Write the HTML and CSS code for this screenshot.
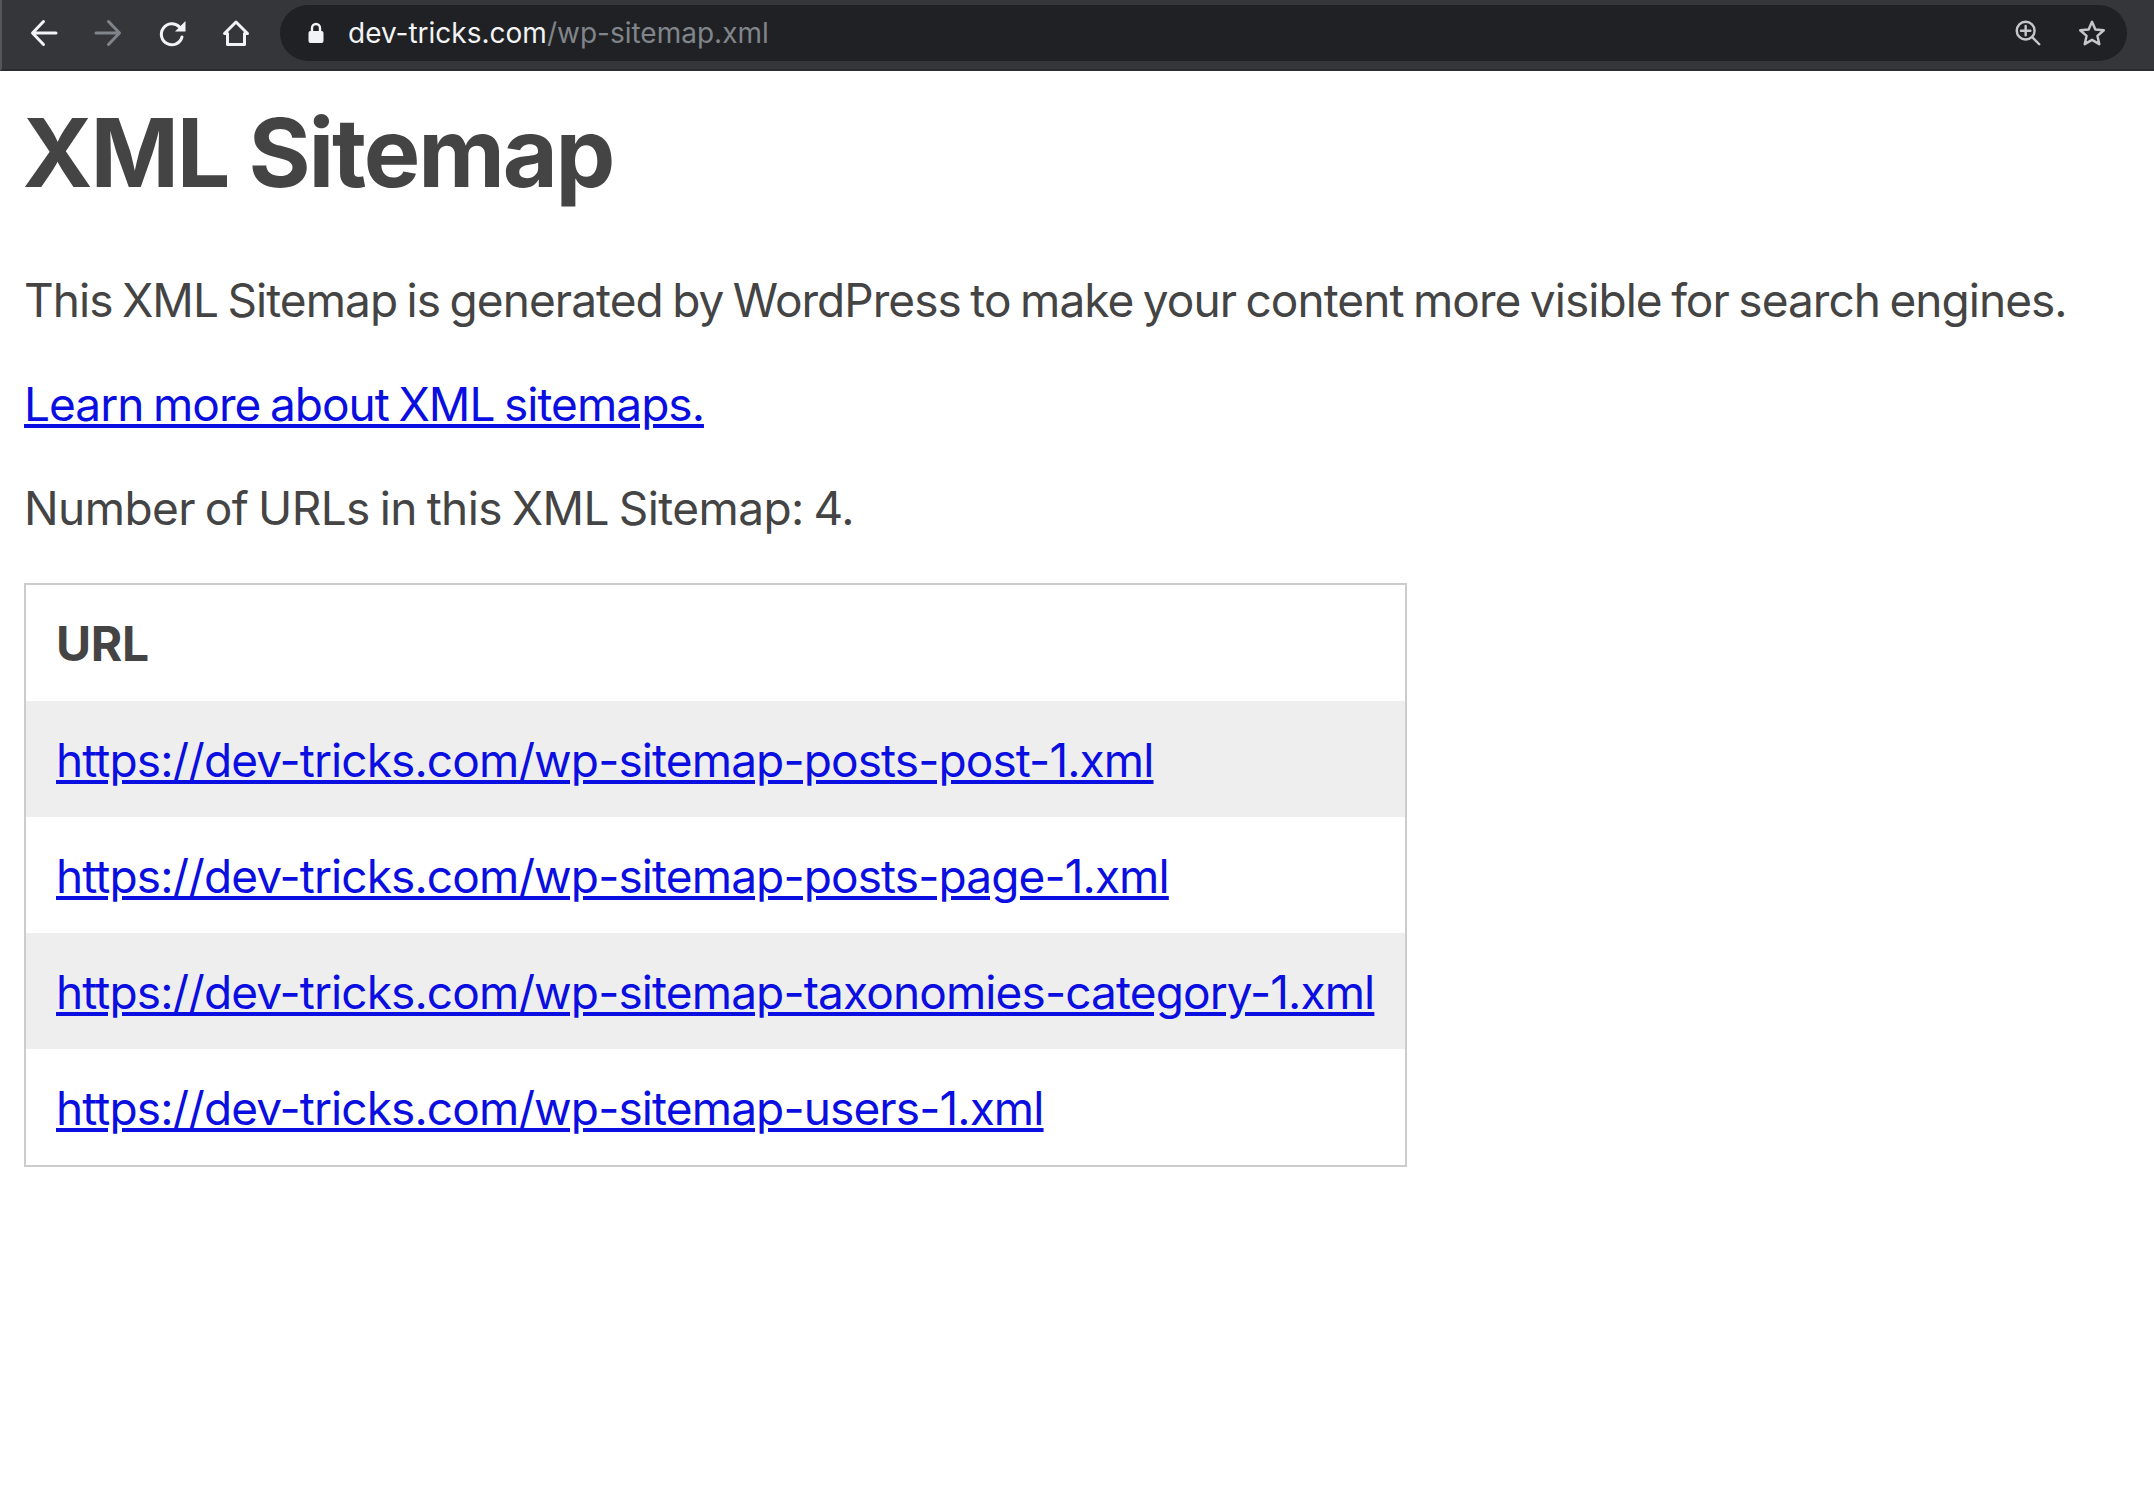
FILE: index.html
```html
<!DOCTYPE html>
<html lang="en">
  <head>
    <meta charset="UTF-8" />
    <title>XML Sitemap</title>
    <link rel="stylesheet" href="styles.css">
  </head>
  <body>
    <!-- browser toolbar -->
    <div class="toolbar">
      <div class="nav">
        <svg class="icon" viewBox="0 0 32 32"><path d="M28 16H5M15.500 4.500 4.500 16l11 11.500" /></svg>
        <svg class="icon dim" viewBox="0 0 32 32"><path d="M4 16h23M16.500 4.500l11 11.500-11 11.500" /></svg>
        <svg class="icon" viewBox="0 0 32 32"><path d="M23.500 10a10.500 10.500 0 1 0 2.500 10" /><path class="solid" d="M29.500 4v10.500H19z" /></svg>
        <svg class="icon" viewBox="0 0 32 32"><path d="M16 5 4.500 16.500h3v11h17v-11h3z" /></svg>
      </div>
      <div class="address">
        <svg class="lock" viewBox="0 0 18 22"><path class="shackle" d="M5 10V6a4 4 0 0 1 8 0v4" /><rect x="1.500" y="9" width="15" height="12" rx="2" /></svg>
        <span class="host">dev-tricks.com</span><span class="path">/wp-sitemap.xml</span>
        <div class="address-actions">
          <svg class="icon small" viewBox="0 0 32 32"><circle cx="13.500" cy="13.500" r="9.500" /><path d="M13.500 8.500v10M8.500 13.500h10M20.500 20.500 28 28" /></svg>
          <svg class="icon small" viewBox="0 0 32 32"><path d="M16 4l3.600 8.300 9 .8-6.800 6 2 8.800L16 23.300 8.200 27.900l2-8.800-6.800-6 9-.8z" /></svg>
        </div>
      </div>
    </div>

    <!-- sitemap content -->
    <div class="content">
      <h1>XML Sitemap</h1>
      <p>This XML Sitemap is generated by WordPress to make your content more visible for search engines.</p>
      <p><a href="#">Learn more about XML sitemaps.</a></p>
      <p class="count">Number of URLs in this XML Sitemap: 4.</p>
      <table class="sitemap">
        <thead>
          <tr><th>URL</th></tr>
        </thead>
        <tbody>
          <tr><td><a href="#">https://dev-tricks.com/wp-sitemap-posts-post-1.xml</a></td></tr>
          <tr><td><a href="#">https://dev-tricks.com/wp-sitemap-posts-page-1.xml</a></td></tr>
          <tr><td><a href="#">https://dev-tricks.com/wp-sitemap-taxonomies-category-1.xml</a></td></tr>
          <tr><td><a href="#">https://dev-tricks.com/wp-sitemap-users-1.xml</a></td></tr>
        </tbody>
      </table>
    </div>
  </body>
</html>
```

FILE: styles.css
```css
body {
  margin: 0;
  background-color: #fff;
  color: #444;
  font-family: Inter, "Liberation Sans", sans-serif;
}

/* toolbar */
.toolbar {
  display: flex;
  align-items: center;
  height: 71px;
  box-sizing: border-box;
  padding: 5px 27px 8px 26px;
  background-color: #35363a;
  border-left: 2px solid #55565a;
  border-bottom: 2px solid #2b2c30;
}

.nav {
  display: flex;
  gap: 32px;
  width: 252px;
}

.icon {
  width: 32px;
  height: 32px;
  fill: none;
  stroke: #f1f3f4;
  stroke-width: 3;
  stroke-linecap: round;
  stroke-linejoin: round;
}

.icon.dim {
  stroke: #80858b;
}

.icon .solid {
  fill: #f1f3f4;
  stroke: none;
}

.icon.small {
  width: 30px;
  height: 30px;
  stroke: #c4c7c9;
  stroke-width: 2.6;
}

.address {
  display: flex;
  flex: 1;
  align-items: center;
  height: 56px;
  padding: 0 20px 0 27px;
  background-color: #202124;
  border-radius: 28px;
  font-size: 28px;
}

.lock {
  width: 18px;
  height: 22px;
  margin-right: 23px;
  fill: #f1f3f4;
}

.lock .shackle {
  fill: none;
  stroke: #f1f3f4;
  stroke-width: 2.4;
}

.host {
  color: #f1f3f4;
}

.path {
  color: #80858b;
}

.address-actions {
  display: flex;
  gap: 34px;
  margin-left: auto;
}

/* content */
.content {
  padding: 0 24px;
}

h1 {
  margin: 0 0 0 -1.5px;
  padding-top: 37px;
  font-size: 95px;
  line-height: 90px;
  letter-spacing: -2.2px;
}

p {
  margin: 62px 0 0;
  font-size: 46px;
  line-height: 42px;
  letter-spacing: -0.96px;
  word-spacing: -2.5px;
}

p.count {
  letter-spacing: -0.59px;
}

h1 + p {
  margin-top: 81px;
}

a {
  color: #0a0ee0;
}

.sitemap {
  margin-top: 54px;
  border: 2px solid #ccc;
  border-collapse: collapse;
  font-size: 46px;
  letter-spacing: -0.88px;
}

.sitemap th,
.sitemap td {
  height: 116px;
  box-sizing: border-box;
  padding: 2px 31px 0 30px;
  text-align: left;
}

.sitemap th {
  height: 117px;
  padding-top: 0;
  font-size: 48px;
  letter-spacing: -0.3px;
}

.sitemap tbody tr:nth-child(odd) {
  background-color: #eee;
}

.sitemap tbody tr:last-child td {
  height: 117px;
}
```
